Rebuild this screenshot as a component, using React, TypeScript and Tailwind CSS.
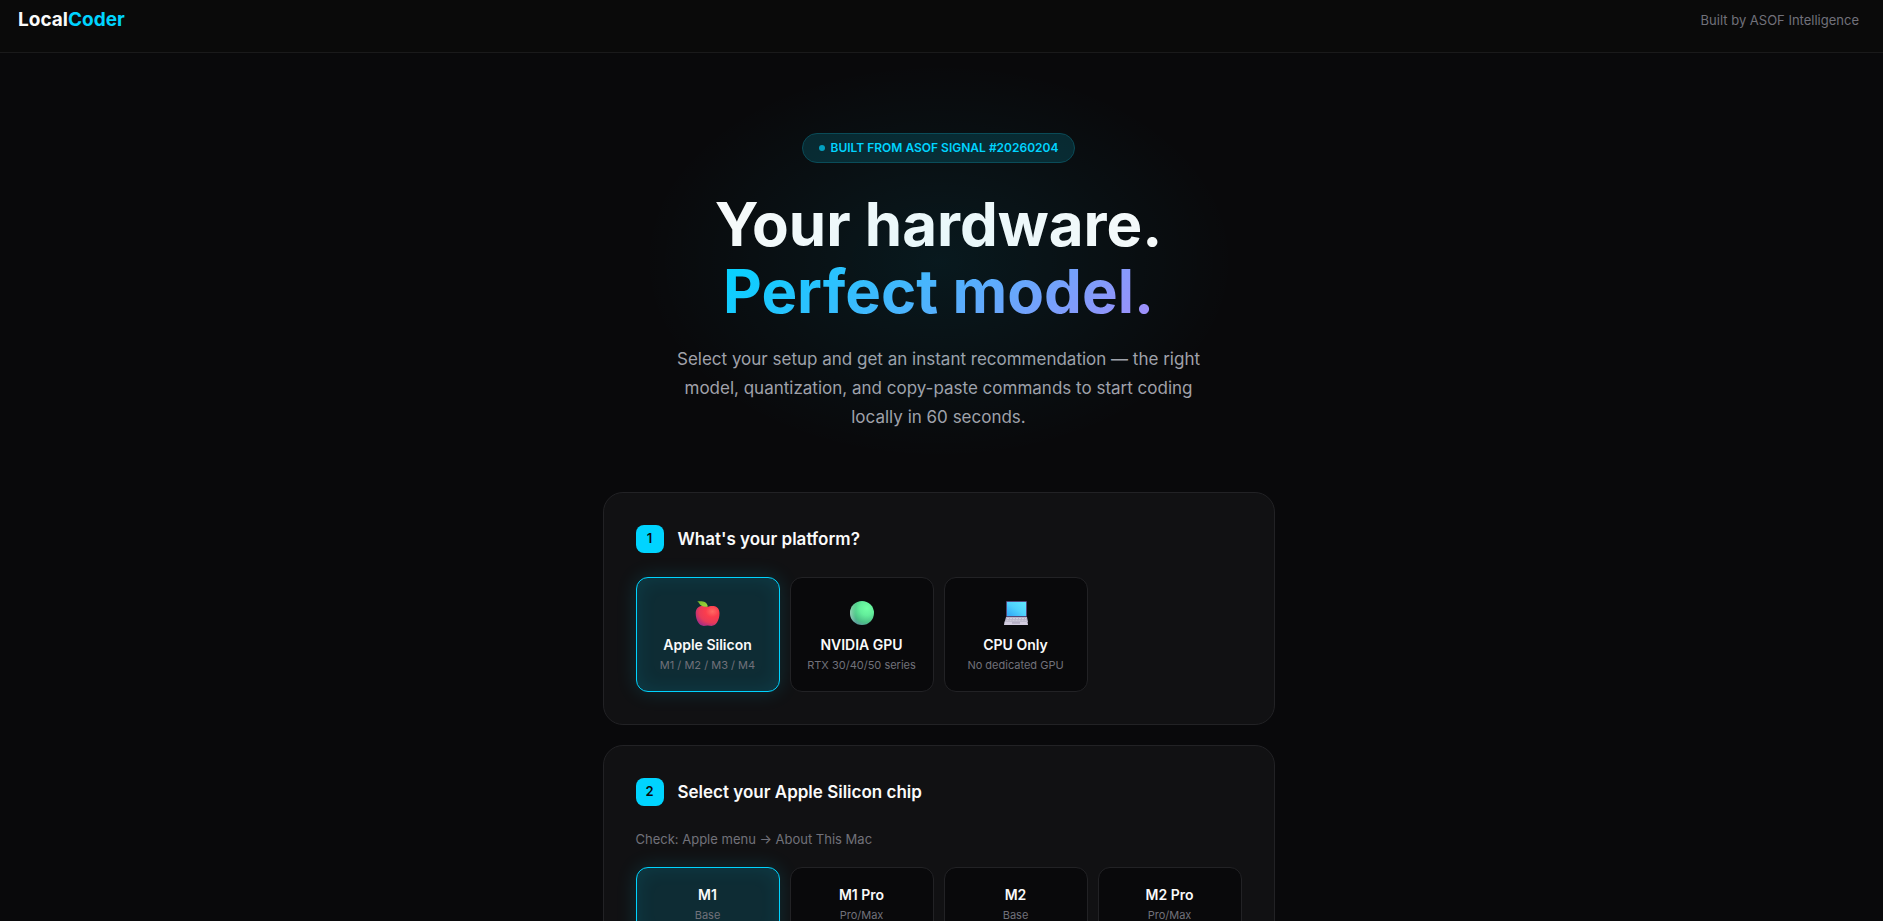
import { useState } from "react";

const AppleIcon = () => (
  <svg viewBox="0 0 25 25" className="h-[25px] w-[25px]" aria-hidden="true">
    <defs>
      <radialGradient id="apple-body" cx="0.7" cy="0.28" r="0.8">
        <stop offset="0" stopColor="#ff6a62" />
        <stop offset="0.35" stopColor="#fb3d4d" />
        <stop offset="0.7" stopColor="#e83a59" />
        <stop offset="1" stopColor="#a92d83" />
      </radialGradient>
      <linearGradient id="apple-leaf" x1="0" y1="0" x2="1" y2="1">
        <stop offset="0" stopColor="#76b82a" />
        <stop offset="1" stopColor="#a3d83c" />
      </linearGradient>
    </defs>
    <path
      d="M12.700 6C14.200 5 16.400 4.700 18.700 5c3.700.4 5.800 3.200 5.800 7.200 0 3.300-.9 6.900-2.500 9.400-1.400 2.300-3.200 3.300-5.500 3.300-1.400 0-2.500-.5-3.900-.5s-2.500.5-3.900.5c-2.300 0-4.100-1-5.500-3.300C1.600 19.100.7 15.500.7 12.200.7 8.200 2.800 5.400 6.500 5c2.300-.3 4.700 0 6.200 1z"
      fill="url(#apple-body)"
    />
    <path d="M2 .6C6.500-.2 12 .2 12.900 5.600 8.400 6.300 5.300 4.700 4.300 2.500 3.800 1.500 3 1 2 .6z" fill="url(#apple-leaf)" />
  </svg>
);

const CircleIcon = () => (
  <svg viewBox="0 0 24 24" className="h-6 w-6" aria-hidden="true">
    <defs>
      <radialGradient id="circle-fill" cx="0.7" cy="0.3" r="0.75">
        <stop offset="0" stopColor="#72ffa6" />
        <stop offset="0.4" stopColor="#63ee9b" />
        <stop offset="0.8" stopColor="#4cbf87" />
        <stop offset="1" stopColor="#5a9f9c" />
      </radialGradient>
      <linearGradient id="circle-edge" x1="0" y1="0" x2="1" y2="0">
        <stop offset="0" stopColor="#a6e6bd" stopOpacity="0.7" />
        <stop offset="0.25" stopColor="#a6e6bd" stopOpacity="0" />
      </linearGradient>
    </defs>
    <circle cx="12" cy="12" r="12" fill="url(#circle-fill)" />
    <circle cx="12" cy="12" r="12" fill="url(#circle-edge)" />
  </svg>
);

const LaptopIcon = () => (
  <svg viewBox="0 0 24 24" className="h-6 w-6" aria-hidden="true">
    <defs>
      <linearGradient id="laptop-screen" x1="0.9" y1="0.1" x2="0.1" y2="0.9">
        <stop offset="0" stopColor="#5ce3ff" />
        <stop offset="0.5" stopColor="#4fd2fd" />
        <stop offset="1" stopColor="#36aef8" />
      </linearGradient>
    </defs>
    <rect x="2" y="0" width="21" height="16" rx="1" fill="#51487a" />
    <rect x="3" y="1" width="19" height="14" fill="url(#laptop-screen)" />
    <path d="M2 16h21l1 5H.6z" fill="#b9b4c8" />
    <path d="M3 17.500h19M2.500 19.300h20" stroke="#d3cfde" strokeWidth="1" strokeDasharray="2 1" />
    <path d="M.5 20.800h23l.5 3.200H0z" fill="#d3cde0" />
    <rect x="8" y="20.800" width="8" height="2" fill="#b5afc5" />
  </svg>
);

const platforms = [
  { id: "apple", name: "Apple Silicon", sub: "M1 / M2 / M3 / M4", icon: <AppleIcon /> },
  { id: "nvidia", name: "NVIDIA GPU", sub: "RTX 30/40/50 series", icon: <CircleIcon /> },
  { id: "cpu", name: "CPU Only", sub: "No dedicated GPU", icon: <LaptopIcon /> },
];

const chips = [
  { id: "m1", name: "M1", sub: "Base" },
  { id: "m1pro", name: "M1 Pro", sub: "Pro/Max" },
  { id: "m2", name: "M2", sub: "Base" },
  { id: "m2pro", name: "M2 Pro", sub: "Pro/Max" },
];

type OptionProps = {
  name: string;
  sub: string;
  icon?: React.ReactNode;
  selected: boolean;
  onClick: () => void;
};

const Option: React.FC<OptionProps> = ({ name, sub, icon, selected, onClick }) => (
  <button
    type="button"
    aria-pressed={selected}
    onClick={onClick}
    className={`flex flex-col items-center rounded-xl border px-2 py-4 text-center ${
      selected
        ? "border-[#00d4ff] bg-[#0e2c34] shadow-[0_0_20px_rgba(0,212,255,0.15),inset_0_0_20px_rgba(0,212,255,0.1)]"
        : "border-[#222225] bg-[#09090b] hover:border-[#333338]"
    }`}
  >
    {icon && <span className="mb-0.5 flex h-[38px] items-center">{icon}</span>}
    <span className="text-sm leading-[22px] font-semibold text-[#fafafa]">{name}</span>
    <span className="text-[11px] leading-[19px] text-[#71717a]">{sub}</span>
  </button>
);

type StepProps = {
  num: number;
  title: string;
  children: React.ReactNode;
};

const Step: React.FC<StepProps> = ({ num, title, children }) => (
  <section className="rounded-[20px] border border-[#222225] bg-[#111113] p-8">
    <div className="mb-6 flex items-center gap-3.5">
      <span className="flex h-7 w-7 items-center justify-center rounded-lg bg-[#00d4ff] text-[13px] font-semibold text-[#09090b]">
        {num}
      </span>
      <h2 className="text-[17px] leading-7 font-semibold text-[#fafafa]">{title}</h2>
    </div>
    {children}
  </section>
);

export default function App() {
  const [platform, setPlatform] = useState("apple");
  const [chip, setChip] = useState("m1");

  return (
    <div className="min-h-screen bg-[#09090b] font-['Inter',sans-serif] text-[#fafafa]">
      <header className="flex items-center justify-between border-b border-[#1a1a1b] bg-[#0a0a0a] pt-2 pr-6 pb-5 pl-[18px]">
        <a href="#" className="text-[19px] leading-6 font-bold">
          Local<span className="text-[#00d4ff]">Coder</span>
        </a>
        <span className="text-[13px] leading-6 text-[#71717a]">Built by ASOF Intelligence</span>
      </header>

      <main className="pr-1.5">
        {/* Hero */}
        <div className="relative flex flex-col items-center px-6 pt-20 pb-[60px] text-center">
          <div className="pointer-events-none absolute top-2 left-1/2 z-10 h-[400px] w-[600px] -translate-x-1/2 bg-[radial-gradient(ellipse,rgba(0,212,255,0.08)_0%,transparent_70%)]" />
          <div className="flex h-[30px] items-center gap-1.5 rounded-full border border-[#0a4854] bg-[#08272e] px-4 text-xs font-semibold text-[#00d4ff]">
            <span className="h-1.5 w-1.5 rounded-full bg-[#00d4ff] opacity-70" />
            BUILT FROM ASOF SIGNAL #20260204
          </div>
          <h1 className="mt-7 text-[60px] leading-[67px] font-bold">
            Your hardware.
            <br />
            <span className="bg-[linear-gradient(135deg,#00d4ff,#a78bfa)] bg-clip-text text-transparent">
              Perfect model.
            </span>
          </h1>
          <p className="mt-5 max-w-[540px] text-[17px] leading-[29px] text-[#a1a1aa]">
            Select your setup and get an instant recommendation — the right model, quantization, and
            copy-paste commands to start coding locally in 60 seconds.
          </p>
        </div>

        {/* Steps */}
        <div className="mx-auto flex max-w-[720px] flex-col gap-5 px-6 pb-20">
          <Step num={1} title="What's your platform?">
            <div className="grid grid-cols-2 gap-2.5 sm:grid-cols-4">
              {platforms.map((p) => (
                <Option
                  key={p.id}
                  name={p.name}
                  sub={p.sub}
                  icon={p.icon}
                  selected={platform === p.id}
                  onClick={() => setPlatform(p.id)}
                />
              ))}
            </div>
          </Step>

          <Step num={2} title="Select your Apple Silicon chip">
            <p className="mb-[18px] text-[13px] leading-[19px] text-[#71717a]">
              Check: Apple menu → About This Mac
            </p>
            <div className="grid grid-cols-2 gap-2.5 sm:grid-cols-4">
              {chips.map((c) => (
                <Option
                  key={c.id}
                  name={c.name}
                  sub={c.sub}
                  selected={chip === c.id}
                  onClick={() => setChip(c.id)}
                />
              ))}
            </div>
          </Step>
        </div>
      </main>
    </div>
  );
}
